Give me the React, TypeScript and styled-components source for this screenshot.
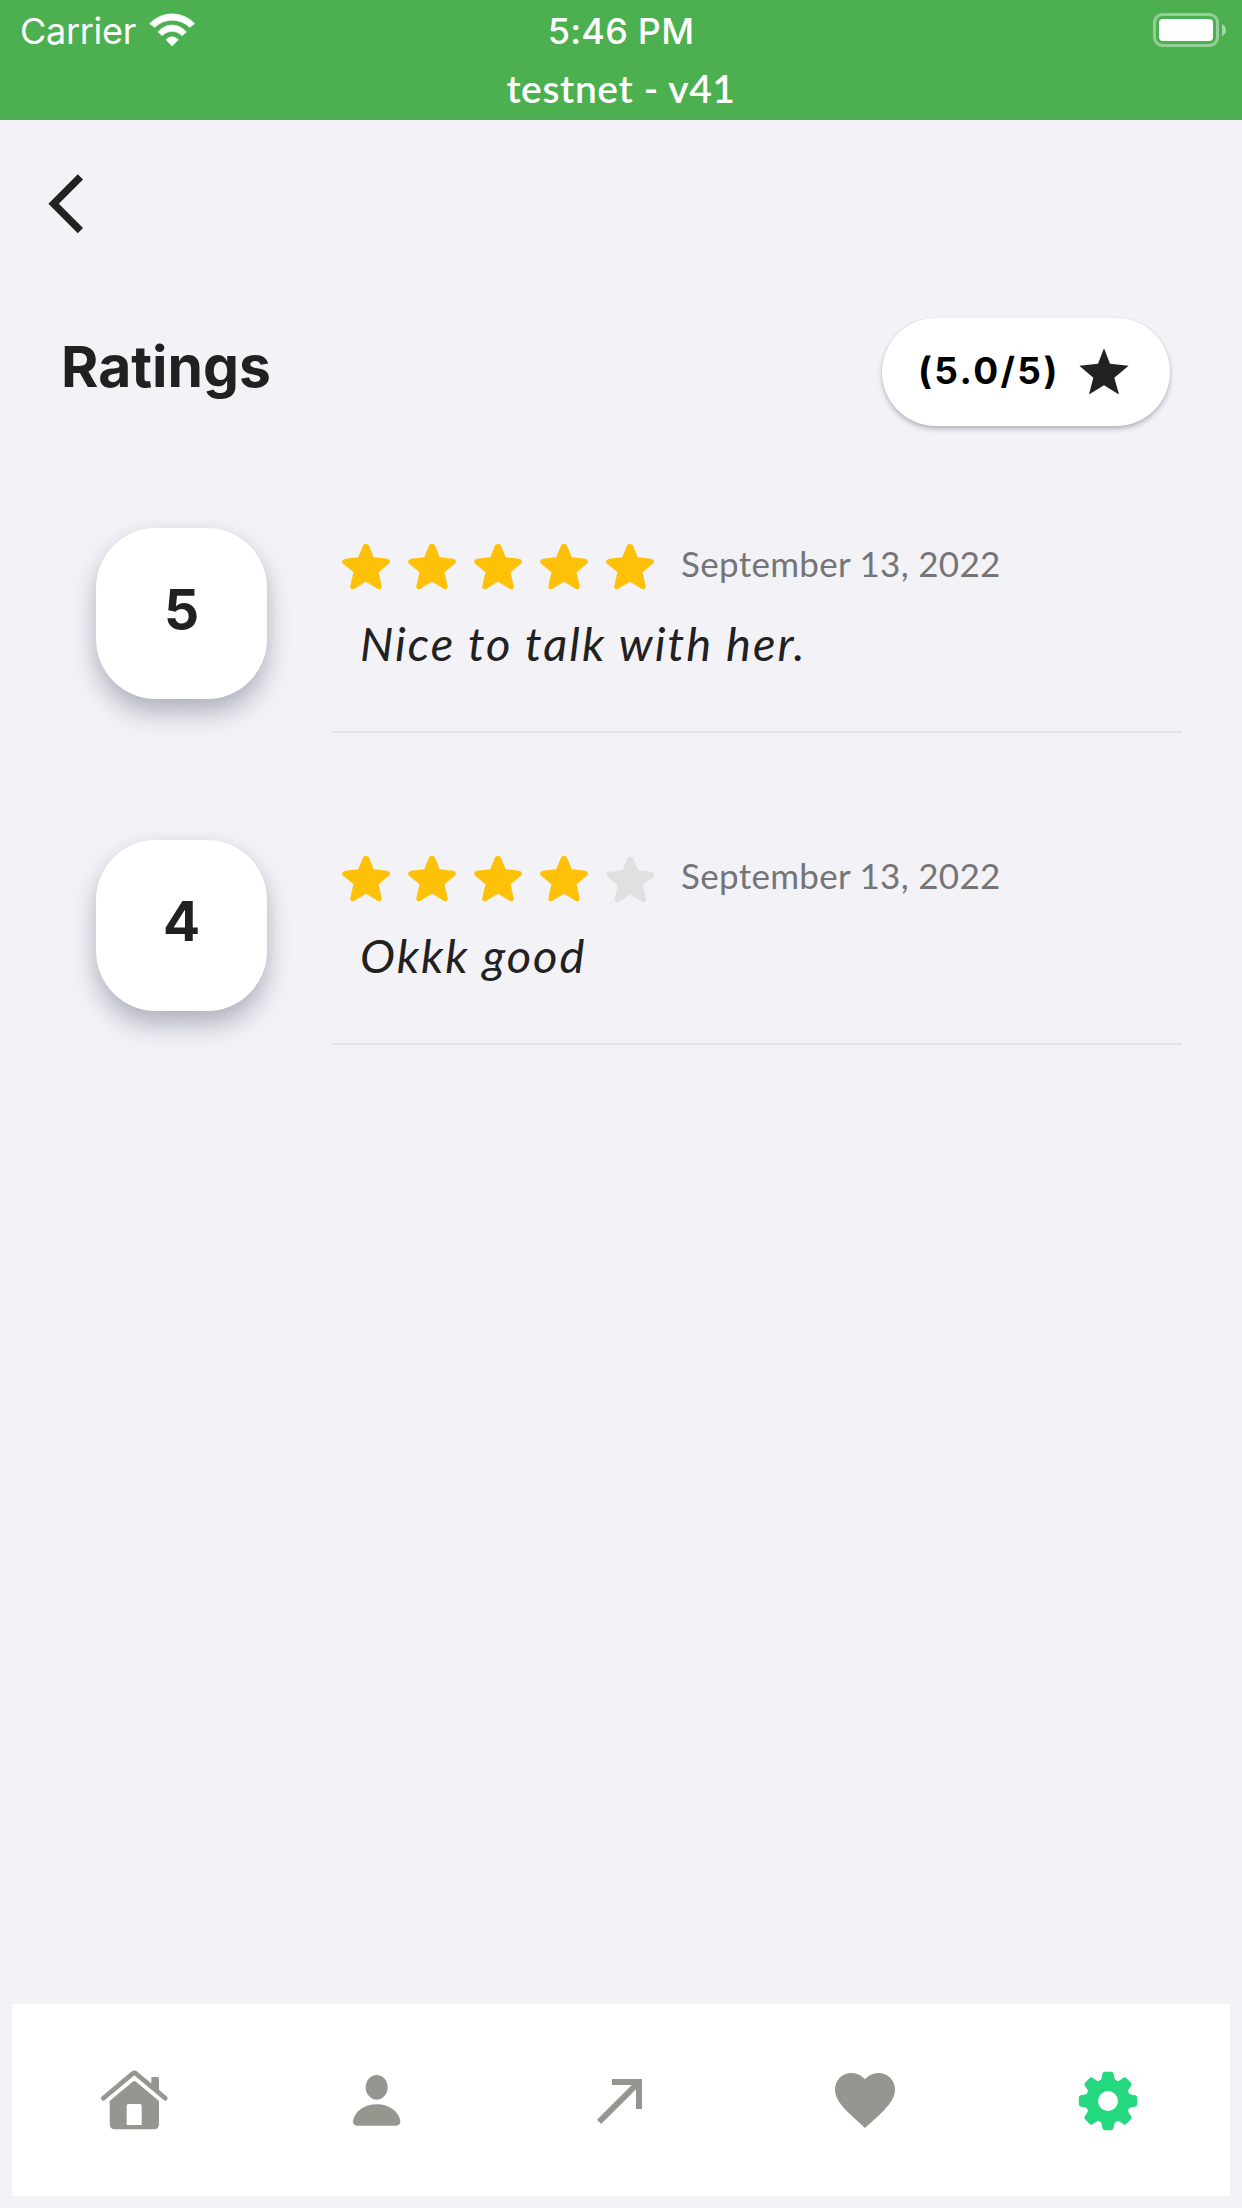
import React from "react";
import styled, { createGlobalStyle } from "styled-components";

const GlobalStyle = createGlobalStyle`
  *, *::before, *::after { box-sizing: border-box; }
  html, body { margin: 0; padding: 0; background: #f2f2f7; }
  svg { display: block; flex: none; }
`;

const display = `Inter, "Liberation Sans", sans-serif`;

const Screen = styled.div`
  width: 1242px;
  height: 2208px;
  display: flex;
  flex-direction: column;
  background: #f2f2f7;
  color: #212121;
  font-family: Lato, "Liberation Sans", sans-serif;
  overflow: hidden;
`;

const Header = styled.header`
  height: 120px;
  background: #4caf50;
  color: #fff;
`;

const StatusBar = styled.div`
  display: grid;
  grid-template-columns: 1fr auto 1fr;
  align-items: start;
  height: 62px;
  padding: 0 20px;
  font-family: ${display};
  font-size: 36px;
  line-height: 62px;
  white-space: nowrap;
`;

const Carrier = styled.div`
  display: flex;
  gap: 13px;
  letter-spacing: -0.3px;

  svg { margin-top: 13px; }
`;

const Clock = styled.div`
  font-weight: 500;
  letter-spacing: 0.2px;
`;

const Battery = styled.div`
  justify-self: end;
  padding-top: 13px;
  margin-right: -4px;
`;

const Network = styled.div`
  text-align: center;
  font-size: 39px;
  line-height: 52px;
  font-weight: 600;
  letter-spacing: 0.6px;
`;

const BackButton = styled.button`
  display: block;
  margin: 48px 0 0 42px;
  padding: 6px;
  border: 0;
  background: none;
  color: #212121;
  width: 60px;
  height: 72px;
`;

const TitleRow = styled.div`
  display: flex;
  align-items: center;
  justify-content: space-between;
  height: 108px;
  margin: 78px 72px 0 61px;
`;

const Title = styled.h1`
  margin: 0 0 11px;
  font-family: ${display};
  font-size: 57px;
  line-height: 96px;
  font-weight: 700;
`;

const ScorePill = styled.div`
  display: flex;
  align-items: center;
  justify-content: space-between;
  width: 288px;
  height: 108px;
  padding: 0 41px 2px 36px;
  border-radius: 54px;
  background: #fff;
  box-shadow: 0 3px 5px rgba(60, 60, 80, 0.32), 0 0 2px rgba(60, 60, 80, 0.08);
`;

const Score = styled.span`
  color: #000;
  font-family: ${display};
  font-size: 37px;
  line-height: 104px;
  font-weight: 700;
  letter-spacing: 2.4px;
  white-space: nowrap;
`;

const ReviewList = styled.ul`
  flex: 1;
  margin: 0;
  padding: 0 60px 0 96px;
  list-style: none;
`;

const Review = styled.li`
  display: flex;
  gap: 66px;
  height: 312px;
  padding-top: 102px;
  margin: 0;

  &:first-child { margin-top: -5px; }
`;

const Badge = styled.div`
  width: 171px;
  height: 171px;
  margin-top: 5px;
  border-radius: 60px;
  background: #fff;
  text-align: center;
  font-family: ${display};
  font-size: 55px;
  line-height: 162px;
  font-weight: 700;
  box-shadow: 0 14px 24px rgba(70, 76, 94, 0.36), 0 0 12px rgba(70, 76, 94, 0.05);
`;

const ReviewBody = styled.div`
  flex: 1;
  border-bottom: 2px solid #e3e3e7;
`;

const ReviewMeta = styled.div`
  display: flex;
  align-items: flex-start;
  height: 72px;
  padding: 21px 0 0 9px;
`;

const Stars = styled.div`
  display: flex;
  gap: 18px;
`;

const ReviewDate = styled.time`
  margin: -5px 0 0 27px;
  color: #757578;
  font-size: 35px;
  line-height: 48px;
  letter-spacing: 0.3px;
  white-space: nowrap;
`;

const Comment = styled.p`
  margin: 13px 0 0 27px;
  font-size: 47px;
  line-height: 70px;
  font-style: italic;
  letter-spacing: 2px;
  white-space: nowrap;
`;

const TabBar = styled.nav`
  display: grid;
  grid-template-columns: repeat(5, 1fr);
  height: 192px;
  margin: 0 12px 12px;
  background: #fff;
`;

const Tab = styled.button<{ $active?: boolean }>`
  display: flex;
  align-items: center;
  justify-content: center;
  padding: 0;
  border: 0;
  background: none;
  color: ${(p) => (p.$active ? "#24d880" : "#969590")};
`;

const WifiIcon = () => (
  <svg width="46" height="34" viewBox="0 0 138 102" fill="currentColor" stroke="currentColor" strokeWidth="2" strokeLinejoin="round">
    <path d="M2 32A92 92 0 0 1 137 32L122 43A75 75 0 0 0 17 43Z" />
    <path d="M27 57A54 54 0 0 1 112 57L99 68A40 40 0 0 0 40 68Z" />
    <path d="M51 80Q69 62 88 80L69.500 99Z" />
  </svg>
);

const BatteryIcon = () => (
  <svg width="73" height="34" viewBox="0 0 73 34">
    <rect x="1.500" y="1.500" width="63" height="31" rx="8" fill="none" stroke="#fff" strokeOpacity=".4" strokeWidth="3" />
    <rect x="6" y="6" width="54" height="22" rx="4" fill="#fff" />
    <path d="M69 11Q73 13 73 17T69 23Z" fill="#fff" fillOpacity=".5" />
  </svg>
);

const BackIcon = () => (
  <svg width="36" height="60" viewBox="0 0 36 60" fill="currentColor">
    <path d="M29.800 .3L35 5.500 10.800 29.800 35 54.100 29.800 59.300 .4 29.800Z" />
  </svg>
);

const SharpStar = () => (
  <svg width="50" height="47" viewBox="0 0 150 141" fill="#212121">
    <path d="M75 .5L93 47.500 149 53.500 106 89.500 120 139.500 75 111.500 30 139.500 43 89.500 1 53.500 57 47.500Z" />
  </svg>
);

const RoundStar = ({ filled }: { filled: boolean }) => (
  <svg width="48" height="46" viewBox="0 0 48 46" overflow="visible" fill={filled ? "#ffc107" : "#e0e0e0"}>
    <path
      transform={filled ? undefined : "translate(0.400 1)"}
      d="M20.900 1.800Q22 -.3 24 -.3T27.100 1.800L31.700 13.300 45 14.700Q47.600 15.200 47.900 17T46.600 20L36.500 28.200 39.700 42Q40 44.200 38.500 45T35.200 44.400L24 37.800 12.800 44.400Q11 45.700 9.500 45T8.300 42L11.500 28.200 1.400 20Q-.2 18.500 .1 17T3 14.700L16.300 13.300Z"
    />
  </svg>
);

const HomeIcon = () => (
  <svg width="72" height="72" viewBox="0 0 216 216" fill="currentColor">
    <path d="M16 103L104 29Q109 25 114 29L202 103" fill="none" stroke="currentColor" strokeWidth="14" strokeLinecap="round" />
    <path d="M160 65V43Q160 39 164 39H179Q183 39 183 43V88Z" />
    <path fillRule="evenodd" d="M35 111L104 53Q109 49 114 53L183 111V180Q183 196 167 196H51Q35 196 35 180ZM91 120Q86 120 86 125V183H131V125Q131 120 126 120Z" />
  </svg>
);

const PersonIcon = () => (
  <svg width="72" height="72" viewBox="0 0 216 216" fill="currentColor">
    <ellipse cx="107" cy="70" rx="33" ry="37" />
    <path d="M36 172C40 143 70 121 107 121S174 143 178 172Q178 185 166 185H48Q36 185 36 172Z" />
  </svg>
);

const ArrowIcon = () => (
  <svg width="72" height="72" viewBox="0 0 72 72" fill="currentColor">
    <path d="M27 15H57V45H51V25.200L16.200 60 12 55.800 46.800 21H27Z" />
  </svg>
);

const HeartIcon = () => (
  <svg width="72" height="72" viewBox="0 0 24 24" fill="currentColor">
    <path d="M12 21.350l-1.450-1.320C5.400 15.360 2 12.280 2 8.500 2 5.420 4.420 3 7.500 3c1.740 0 3.410.81 4.500 2.090C13.090 3.810 14.760 3 16.500 3 19.580 3 22 5.420 22 8.500c0 3.780-3.400 6.860-8.550 11.540L12 21.350z" />
  </svg>
);

const GearIcon = () => (
  <svg width="72" height="72" viewBox="-108 -111 216 216" fill="currentColor">
    <circle r="48" fill="none" stroke="currentColor" strokeWidth="36" />
    {[0, 45, 90, 135, 180, 225, 270, 315].map((angle) => (
      <path
        key={angle}
        transform={`rotate(${angle})`}
        d="M-27 -60Q-20.500 -62 -19.500 -68L-17 -81Q-15.500 -87.500 -10 -87.500H10Q15.500 -87.500 17 -81L19.500 -68Q20.500 -62 27 -60L15 -45H-15Z"
      />
    ))}
  </svg>
);

const reviews = [
  { score: 5, date: "September 13, 2022", comment: "Nice to talk with her." },
  { score: 4, date: "September 13, 2022", comment: "Okkk good" },
];

export default function App() {
  return (
    <Screen>
      <GlobalStyle />
      <Header>
        <StatusBar>
          <Carrier>
            <span>Carrier</span>
            <WifiIcon />
          </Carrier>
          <Clock>5:46 PM</Clock>
          <Battery>
            <BatteryIcon />
          </Battery>
        </StatusBar>
        <Network>testnet - v41</Network>
      </Header>
      <BackButton aria-label="Back">
        <BackIcon />
      </BackButton>
      <TitleRow>
        <Title>Ratings</Title>
        <ScorePill>
          <Score>(5.0/5)</Score>
          <SharpStar />
        </ScorePill>
      </TitleRow>
      <ReviewList>
        {reviews.map((review) => (
          <Review key={review.score}>
            <Badge>{review.score}</Badge>
            <ReviewBody>
              <ReviewMeta>
                <Stars>
                  {[1, 2, 3, 4, 5].map((n) => (
                    <RoundStar key={n} filled={n <= review.score} />
                  ))}
                </Stars>
                <ReviewDate>{review.date}</ReviewDate>
              </ReviewMeta>
              <Comment>{review.comment}</Comment>
            </ReviewBody>
          </Review>
        ))}
      </ReviewList>
      <TabBar>
        <Tab aria-label="Home"><HomeIcon /></Tab>
        <Tab aria-label="Profile"><PersonIcon /></Tab>
        <Tab aria-label="Send"><ArrowIcon /></Tab>
        <Tab aria-label="Favorites"><HeartIcon /></Tab>
        <Tab $active aria-label="Settings"><GearIcon /></Tab>
      </TabBar>
    </Screen>
  );
}
